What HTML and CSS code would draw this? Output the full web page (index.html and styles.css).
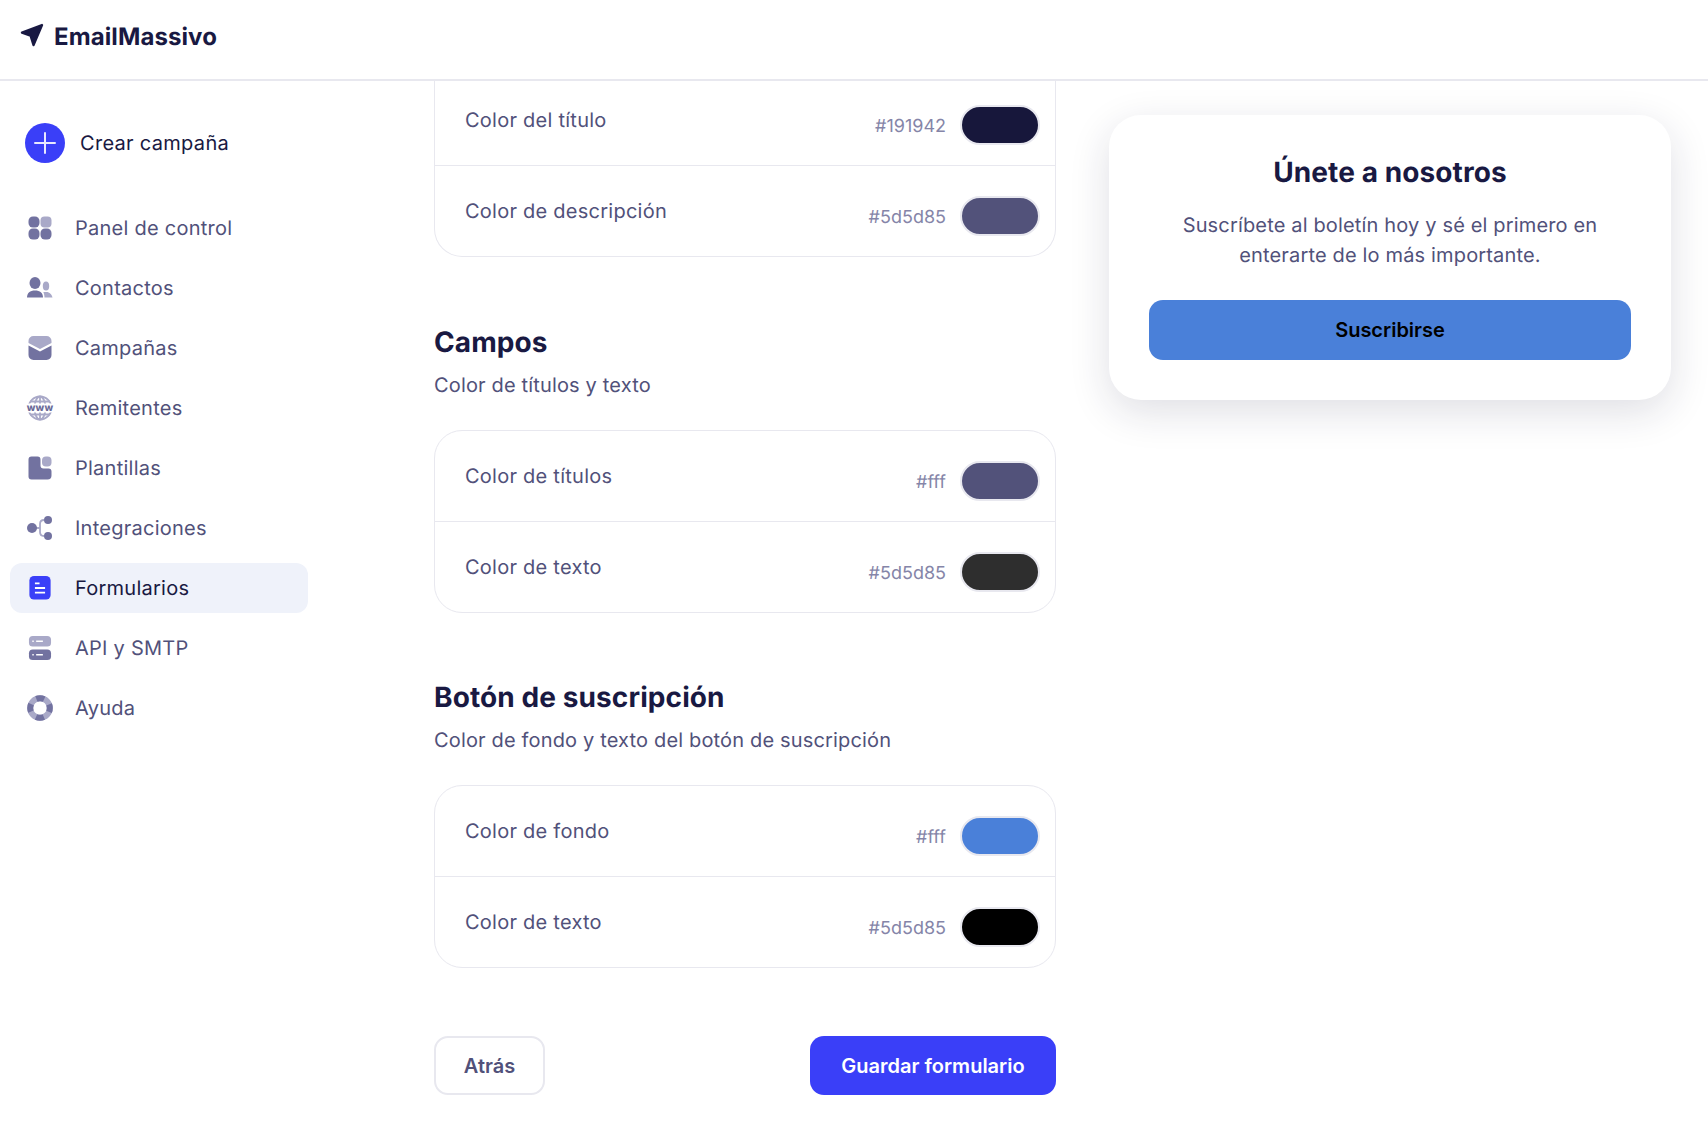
FILE: index.html
```html
<!DOCTYPE html>
<html lang="es">
  <head>
    <meta charset="utf-8" />
    <title>EmailMassivo - Formularios</title>
    <link rel="stylesheet" href="styles.css">
  </head>
  <body>
    <header class="topbar">
      <svg class="logo-icon" width="24" height="24" viewBox="0 0 24 24">
        <path d="M22 2 2 9.500l8.500 3L13.500 22z" fill="#191942" stroke="#191942" stroke-width="2.400" stroke-linejoin="round" />
      </svg>
      <span class="logo-text">EmailMassivo</span>
    </header>

    <div class="layout">
      <aside class="sidebar">
        <a class="create">
          <span class="create-icon">
            <svg width="22" height="22" viewBox="0 0 22 22">
              <path d="M11 1v20M1 11h20" stroke="#e8e9ff" stroke-width="2" stroke-linecap="round" />
            </svg>
          </span>
          Crear campaña
        </a>

        <nav class="menu">
          <a class="menu-item">
            <svg class="menu-icon" viewBox="0 0 24 24">
              <rect x="0.500" y="0.500" width="11" height="11" rx="4.500" fill="#7272a0" />
              <rect x="12.500" y="0.500" width="11" height="11" rx="4" fill="#a9a9c8" />
              <rect x="0.500" y="12.500" width="11" height="11" rx="4.500" fill="#7272a0" />
              <rect x="12.500" y="12.500" width="11" height="11" rx="4.500" fill="#7272a0" />
            </svg>
            Panel de control
          </a>
          <a class="menu-item">
            <svg class="menu-icon menu-icon-26" viewBox="0 0 26 24">
              <ellipse cx="8" cy="7" rx="5.500" ry="6" fill="#7272a0" />
              <path d="M0 21.500c0-4.500 3-7 8-7s8 2.500 8 7z" fill="#7272a0" />
              <ellipse cx="19" cy="10" rx="3.200" ry="4.600" fill="#a9a9c8" />
              <path d="M17.500 21.500c0-1.500-.4-4-1.200-5.500h3.200c3 0 5.500 2.500 6 5.500z" fill="#a9a9c8" />
            </svg>
            Contactos
          </a>
          <a class="menu-item">
            <svg class="menu-icon" viewBox="0 0 24 24">
              <path d="M.5 7V5a5 5 0 0 1 5-5h13a5 5 0 0 1 5 5v2L12 13z" fill="#a9a9c8" />
              <path d="M.5 9.500 12 15.500l11.500-6V19a5 5 0 0 1-5 5h-13a5 5 0 0 1-5-5z" fill="#7272a0" />
            </svg>
            Campañas
          </a>
          <a class="menu-item">
            <svg class="menu-icon menu-icon-wide" viewBox="0 0 28 28">
              <g fill="none" stroke="#a9a9c8" stroke-width="1.800">
                <circle cx="14" cy="14" r="11.500" />
                <ellipse cx="14" cy="14" rx="5.500" ry="11.500" />
                <path d="M14 2v24M4 7.500h20M4 20.500h20" />
              </g>
              <rect y="9.500" width="28" height="9" fill="#fff" />
              <text class="www" x="14" y="17.400" text-anchor="middle">www</text>
            </svg>
            Remitentes
          </a>
          <a class="menu-item">
            <svg class="menu-icon" viewBox="0 0 24 24">
              <path d="M3.500.5h6a3 3 0 0 1 3 3v6a3 3 0 0 0 3 3h5a3 3 0 0 1 3 3v4a4 4 0 0 1-4 4h-16a3 3 0 0 1-3-3v-17a3 3 0 0 1 3-3z" fill="#7272a0" />
              <rect x="14" y="0.500" width="9.500" height="10" rx="4" fill="#a9a9c8" />
            </svg>
            Plantillas
          </a>
          <a class="menu-item">
            <svg class="menu-icon menu-icon-26" viewBox="0 0 26 24">
              <path d="M9 12h4M17 4c-3 0-4 1.500-4 4v8c0 2.500 1 4 4 4" fill="none" stroke="#a9a9c8" stroke-width="1.800" />
              <circle cx="5" cy="12" r="5" fill="#7272a0" />
              <circle cx="21" cy="4" r="4" fill="#7272a0" />
              <circle cx="21" cy="20" r="4" fill="#7272a0" />
            </svg>
            Integraciones
          </a>
          <a class="menu-item active">
            <svg class="menu-icon" viewBox="0 0 24 26">
              <rect x="0.500" width="23" height="25.500" rx="5" fill="#3a3ff8" />
              <path d="M6.500 8h5M6.500 13h11M6.500 18h11" stroke="#fff" stroke-width="2" />
            </svg>
            Formularios
          </a>
          <a class="menu-item">
            <svg class="menu-icon" viewBox="0 0 24 25">
              <rect x="0.500" width="23" height="11" rx="4" fill="#a9a9c8" />
              <rect x="0.500" y="14" width="23" height="11" rx="4" fill="#7272a0" />
              <path d="M4 5.500h1.500M8 5.500h7M4 19.500h1.500M8 19.500h7" stroke="#fff" stroke-width="1.400" />
            </svg>
            API y SMTP
          </a>
          <a class="menu-item">
            <svg class="menu-icon menu-icon-26" viewBox="0 0 26 26">
              <circle cx="13" cy="13" r="9.800" fill="none" stroke="#a9a9c8" stroke-width="6" />
              <circle cx="13" cy="13" r="9.800" fill="none" stroke="#7272a0" stroke-width="6" stroke-dasharray="8 7.390" stroke-dashoffset="4" />
            </svg>
            Ayuda
          </a>
        </nav>
      </aside>

      <main class="editor">
        <div class="color-card color-card-cut">
          <div class="color-row">
            <span class="color-label">Color del título</span>
            <div class="color-value">
              <span class="hex">#191942</span>
              <span class="swatch swatch-navy"></span>
            </div>
          </div>
          <div class="color-row">
            <span class="color-label">Color de descripción</span>
            <div class="color-value">
              <span class="hex">#5d5d85</span>
              <span class="swatch swatch-muted"></span>
            </div>
          </div>
        </div>

        <section class="group">
          <h2>Campos</h2>
          <p>Color de títulos y texto</p>
          <div class="color-card">
            <div class="color-row">
              <span class="color-label">Color de títulos</span>
              <div class="color-value">
                <span class="hex">#fff</span>
                <span class="swatch swatch-muted"></span>
              </div>
            </div>
            <div class="color-row">
              <span class="color-label">Color de texto</span>
              <div class="color-value">
                <span class="hex">#5d5d85</span>
                <span class="swatch swatch-dark"></span>
              </div>
            </div>
          </div>
        </section>

        <section class="group">
          <h2>Botón de suscripción</h2>
          <p>Color de fondo y texto del botón de suscripción</p>
          <div class="color-card">
            <div class="color-row">
              <span class="color-label">Color de fondo</span>
              <div class="color-value">
                <span class="hex">#fff</span>
                <span class="swatch swatch-blue"></span>
              </div>
            </div>
            <div class="color-row">
              <span class="color-label">Color de texto</span>
              <div class="color-value">
                <span class="hex">#5d5d85</span>
                <span class="swatch swatch-black"></span>
              </div>
            </div>
          </div>
        </section>

        <div class="actions">
          <button type="button" class="btn btn-back">Atrás</button>
          <button type="button" class="btn btn-save">Guardar formulario</button>
        </div>
      </main>

      <aside class="preview">
        <h3>Únete a nosotros</h3>
        <p>Suscríbete al boletín hoy y sé el primero en enterarte de lo más importante.</p>
        <button type="button" class="preview-btn">Suscribirse</button>
      </aside>
    </div>
  </body>
</html>
```

FILE: styles.css
```css
* {
  box-sizing: border-box;
}

body {
  margin: 0;
  height: 100vh;
  overflow: hidden;
  background: #fff;
  font-family: Inter, "Noto Sans", sans-serif;
  font-size: 20px;
  color: #51517a;
  text-rendering: geometricPrecision;
}

.topbar {
  height: 81px;
  display: flex;
  align-items: center;
  padding: 0 0 7px 20px;
  border-bottom: 2px solid #e8e8ef;
}

.logo-icon {
  margin-top: -2px;
}

.logo-text {
  margin-left: 10px;
  font-size: 24px;
  font-weight: 700;
  letter-spacing: 0.1px;
  color: #191942;
}

.layout {
  display: flex;
  align-items: flex-start;
}

/* sidebar */
.sidebar {
  width: 318px;
  padding: 42px 10px 0;
  flex-shrink: 0;
}

.create {
  display: flex;
  align-items: center;
  gap: 15px;
  margin-left: 15px;
  margin-bottom: 40px;
  color: #191942;
  letter-spacing: 0.3px;
}

.create-icon {
  width: 40px;
  height: 40px;
  border-radius: 50%;
  background: #3a3ff8;
  display: flex;
  align-items: center;
  justify-content: center;
}

.menu {
  display: flex;
  flex-direction: column;
  gap: 10px;
}

.menu-item {
  height: 50px;
  display: flex;
  align-items: center;
  gap: 23px;
  padding-left: 18px;
  border-radius: 12px;
  letter-spacing: 0.25px;
}

.menu-icon {
  width: 24px;
  height: 24px;
  flex-shrink: 0;
}

.menu-icon-wide {
  width: 28px;
  height: 28px;
  margin: 0 -2px;
}

.menu-icon-26 {
  width: 26px;
  height: 26px;
  margin: 0 -1px;
}

.www {
  font-size: 10px;
  font-weight: 800;
  fill: #6a6a98;
}

.menu-item.active {
  background: #eff2fa;
  color: #191942;
}

/* editor column */
.editor {
  width: 622px;
  margin-left: 116px;
  flex-shrink: 0;
}

.color-card {
  border: 1px solid #e8e8ef;
  border-radius: 28px;
}

.color-card-cut {
  border-top: 0;
  border-radius: 0 0 28px 28px;
}

.color-row {
  height: 91px;
  display: flex;
  align-items: center;
  justify-content: space-between;
  padding: 0 15px 0 30px;
  border-bottom: 1px solid #e8e8ef;
}

.color-row:last-child {
  border-bottom: 0;
  height: 90px;
}

.color-card-cut .color-row:first-child {
  height: 85px;
  padding-bottom: 6px;
}

.color-label {
  letter-spacing: 0.25px;
}

.color-value {
  display: flex;
  align-items: center;
  gap: 14px;
  margin-top: 10px;
}

.hex {
  margin-top: 2px;
  font-size: 18px;
  color: #8585a8;
}

.swatch {
  width: 80px;
  height: 40px;
  border: 2px solid #e8e8ef;
  border-radius: 20px;
}

.swatch-navy {
  background: #17173b;
}

.swatch-muted {
  background: #52527a;
}

.swatch-dark {
  background: #2e2e2e;
}

.swatch-blue {
  background: #4a80d9;
}

.swatch-black {
  background: #000;
}

.group {
  margin-top: 66px;
}

.group + .group {
  margin-top: 65px;
}

.group h2 {
  margin: 0 0 9px;
  font-size: 28px;
  line-height: 38px;
  font-weight: 700;
  letter-spacing: 0.1px;
  color: #191942;
}

.group p {
  margin: 0 0 30px;
  line-height: 30px;
  letter-spacing: 0.16px;
}

.actions {
  display: flex;
  justify-content: space-between;
  margin-top: 68px;
}

.btn {
  height: 59px;
  border-radius: 14px;
  font-family: inherit;
  font-size: 20px;
  font-weight: 600;
}

.btn-back {
  width: 111px;
  background: #fff;
  border: 2px solid #e8e8ef;
  color: #51517a;
}

.btn-save {
  width: 246px;
  background: #3a3ff8;
  border: 0;
  color: #fff;
}

/* form preview */
.preview {
  width: 562px;
  height: 285px;
  margin: 34px 0 0 53px;
  padding: 38px 40px 0;
  flex-shrink: 0;
  border-radius: 32px;
  background: #fff;
  text-align: center;
  box-shadow: 0 12px 40px rgba(25, 25, 66, 0.14);
}

.preview h3 {
  margin: 0 0 19px;
  font-size: 28px;
  line-height: 38px;
  font-weight: 700;
  letter-spacing: 0.1px;
  color: #191942;
}

.preview p {
  margin: 0 0 30px;
  line-height: 30px;
  letter-spacing: 0.16px;
}

.preview-btn {
  width: 100%;
  height: 60px;
  border: 0;
  border-radius: 14px;
  background: #4a80d9;
  color: #000;
  font-family: inherit;
  font-size: 20px;
  font-weight: 600;
}
```
